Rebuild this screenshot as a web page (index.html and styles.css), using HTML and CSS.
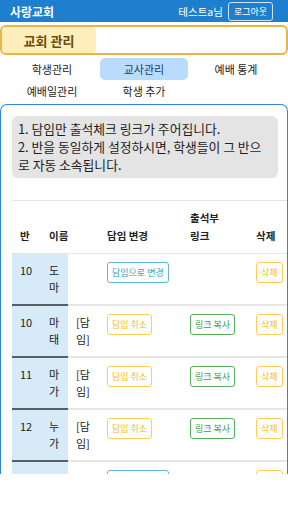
FILE: index.html
```html
<!DOCTYPE html>
<html>
  <head>
    <link rel="stylesheet" href="styles.css">
    <title>사랑교회 - 교사관리</title>
  </head>
  <body>
    <header class="topbar">
      <span class="brand">사랑교회</span>
      <div class="user">
        <span>테스트a님</span>
        <button class="logout">로그아웃</button>
      </div>
    </header>

    <div class="section-title">
      <span class="section-label">교회 관리</span>
    </div>

    <nav class="tabs">
      <a class="tab">학생관리</a>
      <a class="tab active">교사관리</a>
      <a class="tab">예배 통계</a>
      <a class="tab">예배일관리</a>
      <a class="tab">학생 추가</a>
    </nav>

    <!-- teacher list -->
    <div class="card">
      <div class="notice">
        1. 담임만 출석체크 링크가 주어집니다.<br>
        2. 반을 동일하게 설정하시면, 학생들이 그 반으로 자동 소속됩니다.
      </div>

      <table class="teachers">
        <colgroup>
          <col class="c-class">
          <col class="c-name">
          <col class="c-role">
          <col class="c-change">
          <col class="c-link">
          <col class="c-del">
        </colgroup>
        <thead>
          <tr>
            <th>반</th>
            <th>이름</th>
            <th></th>
            <th>담임 변경</th>
            <th>출석부<br>링크</th>
            <th>삭제</th>
          </tr>
        </thead>
        <tbody>
          <tr>
            <td class="fixed">10</td>
            <td class="fixed">도마</td>
            <td></td>
            <td><button class="btn btn-info">담임으로 변경</button></td>
            <td></td>
            <td><button class="btn btn-warn">삭제</button></td>
          </tr>
          <tr>
            <td class="fixed">10</td>
            <td class="fixed">마태</td>
            <td>[담임]</td>
            <td><button class="btn btn-warn">담임 취소</button></td>
            <td><button class="btn btn-ok">링크 복사</button></td>
            <td><button class="btn btn-warn">삭제</button></td>
          </tr>
          <tr>
            <td class="fixed">11</td>
            <td class="fixed">마가</td>
            <td>[담임]</td>
            <td><button class="btn btn-warn">담임 취소</button></td>
            <td><button class="btn btn-ok">링크 복사</button></td>
            <td><button class="btn btn-warn">삭제</button></td>
          </tr>
          <tr>
            <td class="fixed">12</td>
            <td class="fixed">누가</td>
            <td>[담임]</td>
            <td><button class="btn btn-warn">담임 취소</button></td>
            <td><button class="btn btn-ok">링크 복사</button></td>
            <td><button class="btn btn-warn">삭제</button></td>
          </tr>
          <tr>
            <td class="fixed">13</td>
            <td class="fixed">요한</td>
            <td></td>
            <td><button class="btn btn-info">담임으로 변경</button></td>
            <td></td>
            <td><button class="btn btn-warn">삭제</button></td>
          </tr>
        </tbody>
      </table>
    </div>
  </body>
</html>
```

FILE: styles.css
```css
*,
*::before,
*::after {
  box-sizing: border-box;
}
body {
  margin: 0;
  font-family: "Noto Sans CJK KR", "Noto Sans", sans-serif;
  color: #222;
  background: #fff;
}
button {
  font: inherit;
  margin: 0;
  background: transparent;
  cursor: pointer;
}

/* top bar */
.topbar {
  display: flex;
  align-items: center;
  justify-content: space-between;
  height: 22px;
  padding: 0 15px 0 10px;
  background: #1e7fcf;
  color: #fff;
}
.brand {
  font-size: 12px;
  font-weight: 700;
}
.user {
  display: flex;
  align-items: center;
  gap: 5px;
  font-size: 10.5px;
}
.logout {
  height: 19px;
  padding: 0 5px;
  border: 1px solid #cfe4f6;
  border-radius: 3px;
  color: #fff;
  font-size: 9px;
  line-height: 17px;
}

/* section title */
.section-title {
  display: flex;
  height: 30px;
  margin-top: 3px;
  border: 2px solid #e6b647;
  border-radius: 6px;
}
.section-label {
  display: flex;
  align-items: center;
  justify-content: center;
  width: 94px;
  background: #fdeebb;
  border-radius: 4px;
  color: #6e4c09;
  font-size: 13px;
  font-weight: 700;
}

/* tabs */
.tabs {
  display: grid;
  grid-template-columns: repeat(3, 88px);
  grid-auto-rows: 22px;
  column-gap: 4px;
  padding: 3px 8px 2px;
}
.tab {
  display: flex;
  align-items: center;
  justify-content: center;
  border-radius: 5px;
  font-size: 11px;
  color: #222;
}
.tab.active {
  background: #b9dbfc;
  color: #1a3d66;
}

/* card */
.card {
  height: 370px;
  overflow: hidden;
  padding: 11px 0 0 11px;
  border: 1.5px solid #2e86d8;
  border-bottom: none;
  border-radius: 7px 7px 0 0;
}
.notice {
  margin: 0 9px 22px 0;
  padding: 4px 6px;
  background: #e4e4e4;
  border-radius: 6px;
  font-size: 12.8px;
  line-height: 18px;
  color: #1c1c1c;
}

/* table */
.teachers {
  table-layout: fixed;
  width: 282px;
  border-collapse: collapse;
  font-size: 11px;
  line-height: 17px;
}
.c-class { width: 29px; }
.c-name { width: 27px; }
.c-role { width: 31px; }
.c-change { width: 83px; }
.c-link { width: 66px; }
.c-del { width: 46px; }
.teachers th {
  padding: 8px;
  border-top: 1.5px solid #e4e4e4;
  text-align: left;
  vertical-align: bottom;
  white-space: nowrap;
  font-weight: 700;
  line-height: 18px;
  font-size: 10.5px;
}
.teachers td {
  padding: 8px;
  border-top: 2px solid #e6e6e6;
  vertical-align: top;
  word-break: break-all;
}
.teachers tbody tr:first-child td {
  border-top-width: 1.5px;
}
.teachers td.fixed {
  background: #d6eaf8;
  border-top-color: #566068;
}
.teachers tbody tr:first-child td.fixed {
  border-top-color: #e4e4e4;
}

/* buttons */
.btn {
  height: 21px;
  padding: 0 4px;
  border: 1px solid;
  border-radius: 3px;
  font-size: 9px;
  line-height: 19px;
  white-space: nowrap;
}
.btn-info {
  border-color: #5fb8cc;
  color: #38a0bb;
}
.btn-warn {
  border-color: #ffcd55;
  color: #f7bc2c;
}
.btn-ok {
  border-color: #58ae5c;
  color: #3f9b43;
}
```
